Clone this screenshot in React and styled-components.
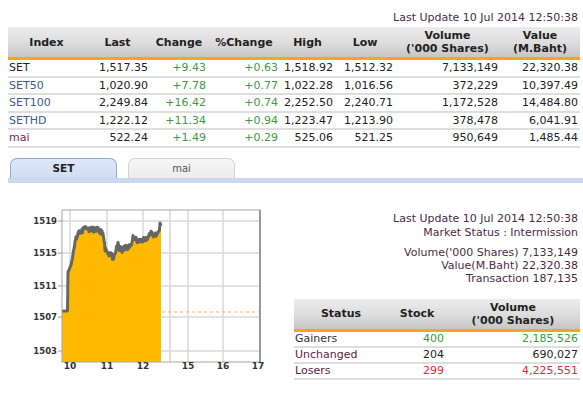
import React from 'react';
import styled, { createGlobalStyle } from 'styled-components';

const GlobalStyle = createGlobalStyle`
  body {
    margin: 0;
    background: #fff;
    font-family: "DejaVu Sans", Verdana, sans-serif;
    font-size: 11px;
    color: #222;
  }
`;

const Page = styled.div`
  width: 572px;
  padding: 10px 0 0 8px;
`;

const UpdateLine = styled.div`
  text-align: right;
  line-height: 15px;
  padding-right: 2px;
  margin-bottom: 2px;
  color: #4d2a45;
`;

const Table = styled.table`
  width: ${p => p.$width || 572}px;
  border-collapse: collapse;
  table-layout: fixed;
`;

const Th = styled.th`
  height: 30px;
  padding: 0 2px;
  font-weight: bold;
  font-size: 11px;
  line-height: 13px;
  text-align: center;
  color: #222;
  background: linear-gradient(#ececec, #dcdcdc 55%, #c6c6c6);
  border-bottom: 3px solid #f5a71c;
`;

const Td = styled.td`
  height: ${p => p.$h || 15.5}px;
  padding: 0 2px 0 ${p => (p.$left ? 1 : 2)}px;
  text-align: ${p => (p.$left ? 'left' : 'right')};
  color: ${p => p.$color || '#222'};
  border-bottom: 2px solid #dedede;
  white-space: nowrap;
  line-height: 13px;
`;

const Tabs = styled.div`
  margin-top: 10px;
`;

const TabRow = styled.div`
  display: flex;
  gap: 11px;
  padding-left: 2px;
`;

const Tab = styled.div`
  box-sizing: border-box;
  width: 107px;
  height: 20px;
  border: 1px solid ${p => (p.$active ? '#93a6c6' : '#d2d2d2')};
  border-bottom: none;
  border-radius: 7px 7px 0 0;
  background: ${p => (p.$active ? 'linear-gradient(#dfe8f8, #cfdcf4)' : 'linear-gradient(#f6f6f6, #ececec)')};
  display: flex;
  align-items: center;
  justify-content: center;
  font-size: ${p => (p.$active ? 10.5 : 10)}px;
  font-weight: ${p => (p.$active ? 'bold' : 'normal')};
  color: ${p => (p.$active ? '#222' : '#555')};
`;

const TabBar = styled.div`
  height: 5px;
  margin-right: -3px;
  background: #c9d7f1;
`;

const Bottom = styled.div`
  display: flex;
`;

const ChartSvg = styled.svg`
  display: block;
  margin-top: 17px;
  flex: none;
`;

const Side = styled.div`
  margin-left: auto;
  width: 286px;
  padding-top: 29px;
`;

const InfoLine = styled.div`
  text-align: right;
  padding-right: 2px;
  line-height: ${p => p.$lh || 14}px;
  color: #4d2a45;
  margin-top: ${p => p.$gap || 0}px;
`;

const StatWrap = styled.div`
  margin-top: 14px;
`;

const indices = [
  ['SET', '#222', '1,517.35', '+9.43', '+0.63', '1,518.92', '1,512.32', '7,133,149', '22,320.38'],
  ['SET50', '#3e5a8c', '1,020.90', '+7.78', '+0.77', '1,022.28', '1,016.56', '372,229', '10,397.49'],
  ['SET100', '#3e5a8c', '2,249.84', '+16.42', '+0.74', '2,252.50', '2,240.71', '1,172,528', '14,484.80'],
  ['SETHD', '#3e5a8c', '1,222.12', '+11.34', '+0.94', '1,223.47', '1,213.90', '378,478', '6,041.91'],
  ['mai', '#7a2a4c', '522.24', '+1.49', '+0.29', '525.06', '521.25', '950,649', '1,485.44'],
];

const stats = [
  ['Gainers', '#333', '400', '2,185,526', '#3d9a3d'],
  ['Unchanged', '#5b2740', '204', '690,027', '#222'],
  ['Losers', '#5b2740', '299', '4,225,551', '#e8283a'],
];

const GREEN = '#3d9a3d';

const keyPts = [
  [68, 272], [70, 268], [72, 262], [74, 250], [75, 241], [77, 236], [79, 233], [82, 231],
  [85, 228], [88, 230], [91, 229], [94, 230], [97, 229], [100, 231], [102, 233], [103.5, 236],
  [105, 249], [108, 253], [111, 255], [113, 258], [115, 254], [117, 247], [118, 243], [119, 248],
  [122, 250], [125, 248], [128, 247], [131, 244], [133, 238], [135, 237], [137, 241], [140, 241],
  [143, 240], [146, 239], [148, 236], [150, 233], [153, 235], [156, 234], [158, 233], [159.5, 230],
  [160, 223], [161, 226],
];

// interpolate key points every half pixel with a deterministic jitter
function buildLine() {
  const pts = [[62, 311], [67.5, 311]];
  for (let x = 68; x <= 161; x += 0.5) {
    let i = 0;
    while (i < keyPts.length - 2 && keyPts[i + 1][0] < x) i++;
    const [x0, y0] = keyPts[i];
    const [x1, y1] = keyPts[i + 1];
    const t = Math.min(1, Math.max(0, (x - x0) / (x1 - x0)));
    const n = Math.sin(x * 12.9898) * 43758.5453;
    const jitter = x > 69 && x < 159 ? ((n - Math.floor(n)) - 0.5) * 5 : 0;
    pts.push([x, y0 + (y1 - y0) * t + jitter]);
  }
  return pts;
}

const yTicks = [[1519, 221], [1515, 253], [1511, 286], [1507, 317], [1503, 351]];
const xTicks = [['10', 70], ['11', 107], ['12', 143], ['15', 188], ['16', 223], ['17', 258]];
const vGrid = [70, 107, 143, 170, 188, 223];

function Chart() {
  const line = buildLine();
  const lineStr = line.map(p => p.join(',')).join(' ');
  const fillStr = `62,362 ${lineStr} 161,362`;
  return (
    <ChartSvg width="262" height="180" viewBox="8 200 262 180">
      <rect x="62" y="210" width="198" height="152" fill="#fff" />
      {vGrid.map(x => (
        <line key={x} x1={x} y1="210" x2={x} y2="362" stroke="#d9d9d9" strokeWidth="1.5" />
      ))}
      {yTicks.map(([v, y]) => (
        <line key={v} x1="62" y1={y} x2="260" y2={y} stroke="#d9d9d9" strokeWidth="1.5" />
      ))}
      <line x1="162" y1="312" x2="260" y2="312" stroke="#f6b73c" strokeWidth="1.2" strokeDasharray="3 3" />
      <polygon points={fillStr} fill="#ffb900" />
      <polyline points={lineStr} fill="none" stroke="#666" strokeWidth="3" strokeLinejoin="round" />
      <rect x="62" y="210" width="198" height="152" fill="none" stroke="#a6a6a6" strokeWidth="1" />
      <line x1="260" y1="210" x2="260" y2="362" stroke="#999" strokeWidth="2" />
      {yTicks.map(([v, y]) => (
        <g key={v}>
          <line x1="58" y1={y} x2="62" y2={y} stroke="#999" />
          <text x="57" y={y + 3} textAnchor="end" fontSize="8.5" fontWeight="bold" fill="#333" fontFamily="DejaVu Sans, Verdana, sans-serif">{v}</text>
        </g>
      ))}
      {xTicks.map(([l, x]) => (
        <text key={l} x={x} y="369" textAnchor="middle" fontSize="9" fontWeight="bold" fill="#333" fontFamily="DejaVu Sans, Verdana, sans-serif">{l}</text>
      ))}
    </ChartSvg>
  );
}

export default function App() {
  return (
    <>
      <GlobalStyle />
      <Page>
        <UpdateLine>Last Update 10 Jul 2014 12:50:38</UpdateLine>
        <Table>
          <colgroup>
            <col style={{ width: 77 }} />
            <col style={{ width: 65 }} />
            <col style={{ width: 58 }} />
            <col style={{ width: 72 }} />
            <col style={{ width: 55 }} />
            <col style={{ width: 60 }} />
            <col style={{ width: 105 }} />
            <col style={{ width: 80 }} />
          </colgroup>
          <thead>
            <tr>
              <Th>Index</Th>
              <Th>Last</Th>
              <Th>Change</Th>
              <Th>%Change</Th>
              <Th>High</Th>
              <Th>Low</Th>
              <Th>Volume<br />('000 Shares)</Th>
              <Th>Value<br />(M.Baht)</Th>
            </tr>
          </thead>
          <tbody>
            {indices.map(r => (
              <tr key={r[0]}>
                <Td $left $color={r[1]}>{r[0]}</Td>
                <Td>{r[2]}</Td>
                <Td $color={GREEN}>{r[3]}</Td>
                <Td $color={GREEN}>{r[4]}</Td>
                <Td>{r[5]}</Td>
                <Td>{r[6]}</Td>
                <Td>{r[7]}</Td>
                <Td>{r[8]}</Td>
              </tr>
            ))}
          </tbody>
        </Table>

        <Tabs>
          <TabRow>
            <Tab $active>SET</Tab>
            <Tab>mai</Tab>
          </TabRow>
          <TabBar />
        </Tabs>

        <Bottom>
          <Chart />
          <Side>
            <InfoLine>Last Update 10 Jul 2014 12:50:38</InfoLine>
            <InfoLine>Market Status : Intermission</InfoLine>
            <InfoLine $lh={13} $gap={6}>Volume('000 Shares) 7,133,149</InfoLine>
            <InfoLine $lh={13}>Value(M.Baht) 22,320.38</InfoLine>
            <InfoLine $lh={13}>Transaction 187,135</InfoLine>
            <StatWrap>
              <Table $width={286}>
                <colgroup>
                  <col style={{ width: 94 }} />
                  <col style={{ width: 58 }} />
                  <col style={{ width: 134 }} />
                </colgroup>
                <thead>
                  <tr>
                    <Th>Status</Th>
                    <Th>Stock</Th>
                    <Th>Volume<br />('000 Shares)</Th>
                  </tr>
                </thead>
                <tbody>
                  {stats.map(s => (
                    <tr key={s[0]}>
                      <Td $left $h={14} $color={s[1]}>{s[0]}</Td>
                      <Td $h={14} $color={s[4]}>{s[2]}</Td>
                      <Td $h={14} $color={s[4]}>{s[3]}</Td>
                    </tr>
                  ))}
                </tbody>
              </Table>
            </StatWrap>
          </Side>
        </Bottom>
      </Page>
    </>
  );
}
